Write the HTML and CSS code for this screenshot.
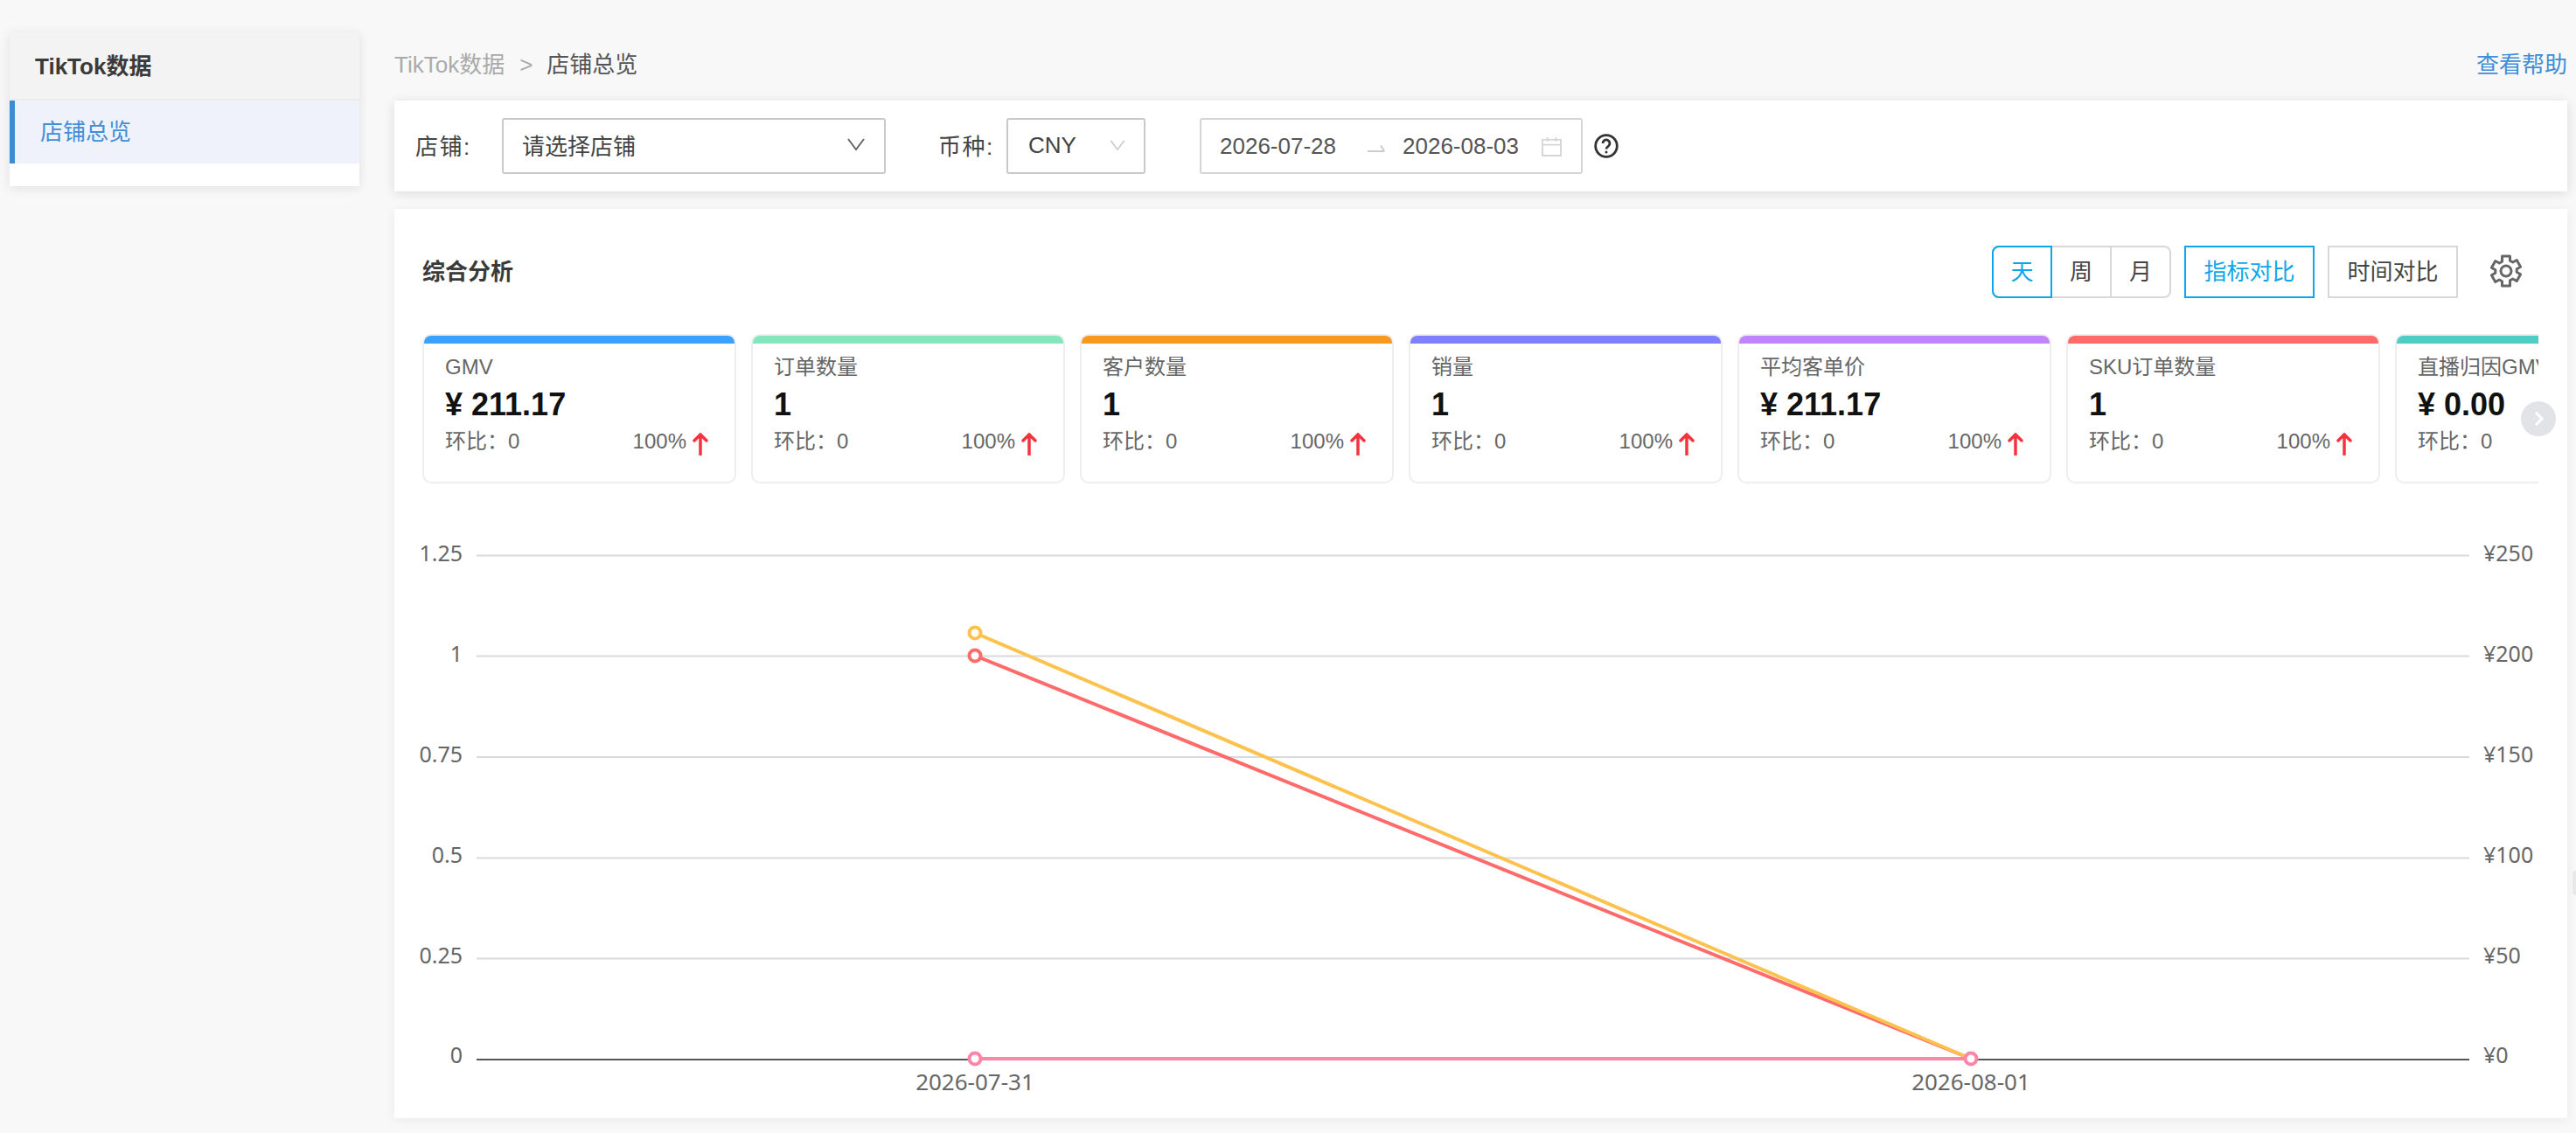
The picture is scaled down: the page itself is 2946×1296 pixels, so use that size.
FILE: index.html
```html
<!DOCTYPE html>
<html lang="zh-CN">
<head>
    <meta charset="UTF-8">
    <title>店铺总览</title>
    <link rel="stylesheet" href="styles.css">
</head>
<body>
    <aside class="sidebar">
        <div class="sidebar-title">TikTok数据</div>
        <div class="sidebar-item">店铺总览</div>
    </aside>

    <main class="main">
        <div class="topbar">
            <div class="crumbs"><span class="crumb-root">TikTok数据</span><span class="crumb-sep">&gt;</span><span>店铺总览</span></div>
            <a class="help-link">查看帮助</a>
        </div>

        <!-- 筛选 -->
        <section class="filter-card">
            <span class="filter-label">店铺:</span>
            <div class="select shop-select">
                <span>请选择店铺</span>
                <svg class="chevron" viewBox="0 0 20 14"><path d="M1 1l9 12 9-12"/></svg>
            </div>
            <span class="filter-label currency-label">币种:</span>
            <div class="select currency-select">
                <span>CNY</span>
                <svg class="chevron chevron-light" viewBox="0 0 20 14"><path d="M1 1l9 12 9-12"/></svg>
            </div>
            <div class="date-range">
                <span>2026-07-28</span>
                <svg class="range-arrow" viewBox="0 0 20 9"><path d="M0 8h19.500M15 1.500l4 6"/></svg>
                <span>2026-08-03</span>
                <svg class="calendar" viewBox="0 0 24 24"><path d="M1 4h22v19H1zM1 10h22M7 1v5M17 1v5"/></svg>
            </div>
            <svg class="help-icon" viewBox="0 0 28 28">
                <circle cx="14" cy="14" r="12.300"/>
                <path d="M10 11a4 4 0 1 1 6.200 3.300c-1.400.9-2.200 1.700-2.200 3.200"/>
                <circle class="help-dot" cx="14" cy="21" r="1.500"/>
            </svg>
        </section>

        <!-- 综合分析 -->
        <section class="analysis-card">
            <div class="analysis-head">
                <h2 class="analysis-title">综合分析</h2>
                <div class="toggle-group">
                    <span class="toggle toggle-on">天</span>
                    <span class="toggle">周</span>
                    <span class="toggle">月</span>
                </div>
                <span class="compare compare-on">指标对比</span>
                <span class="compare">时间对比</span>
                <svg class="gear" viewBox="0 0 38 38">
                    <path d="M14.500 2h9v5.200l3.200 1.800 4.500-2.500 4.400 7.800-4.400 2.500v3.400l4.400 2.500-4.400 7.800-4.500-2.500-3.200 1.800V36h-9v-5.200l-3.200-1.800-4.500 2.500-4.400-7.800 4.400-2.500v-3.400l-4.400-2.500 4.400-7.800 4.500 2.500 3.200-1.800z"/>
                    <circle cx="19" cy="19" r="6"/>
                </svg>
            </div>

            <div class="metrics-wrap">
                <div class="metrics">
                    <div class="metric metric-blue">
                        <div class="metric-name">GMV</div>
                        <div class="metric-value">¥ 211.17</div>
                        <div class="metric-foot"><span>环比&#xFF1A;0</span><span class="metric-rate">100%<svg class="up" viewBox="0 0 18 26"><path d="M9 25V2M2 9l7-7 7 7"/></svg></span></div>
                    </div>
                    <div class="metric metric-green">
                        <div class="metric-name">订单数量</div>
                        <div class="metric-value">1</div>
                        <div class="metric-foot"><span>环比&#xFF1A;0</span><span class="metric-rate">100%<svg class="up" viewBox="0 0 18 26"><path d="M9 25V2M2 9l7-7 7 7"/></svg></span></div>
                    </div>
                    <div class="metric metric-orange">
                        <div class="metric-name">客户数量</div>
                        <div class="metric-value">1</div>
                        <div class="metric-foot"><span>环比&#xFF1A;0</span><span class="metric-rate">100%<svg class="up" viewBox="0 0 18 26"><path d="M9 25V2M2 9l7-7 7 7"/></svg></span></div>
                    </div>
                    <div class="metric metric-indigo">
                        <div class="metric-name">销量</div>
                        <div class="metric-value">1</div>
                        <div class="metric-foot"><span>环比&#xFF1A;0</span><span class="metric-rate">100%<svg class="up" viewBox="0 0 18 26"><path d="M9 25V2M2 9l7-7 7 7"/></svg></span></div>
                    </div>
                    <div class="metric metric-purple">
                        <div class="metric-name">平均客单价</div>
                        <div class="metric-value">¥ 211.17</div>
                        <div class="metric-foot"><span>环比&#xFF1A;0</span><span class="metric-rate">100%<svg class="up" viewBox="0 0 18 26"><path d="M9 25V2M2 9l7-7 7 7"/></svg></span></div>
                    </div>
                    <div class="metric metric-red">
                        <div class="metric-name">SKU订单数量</div>
                        <div class="metric-value">1</div>
                        <div class="metric-foot"><span>环比&#xFF1A;0</span><span class="metric-rate">100%<svg class="up" viewBox="0 0 18 26"><path d="M9 25V2M2 9l7-7 7 7"/></svg></span></div>
                    </div>
                    <div class="metric metric-teal">
                        <div class="metric-name">直播归因GMV</div>
                        <div class="metric-value">¥ 0.00</div>
                        <div class="metric-foot"><span>环比&#xFF1A;0</span><span class="metric-rate">100%<svg class="up" viewBox="0 0 18 26"><path d="M9 25V2M2 9l7-7 7 7"/></svg></span></div>
                    </div>
                </div>
                <span class="metrics-next"><svg viewBox="0 0 12 20"><path d="M2 2l8 8-8 8"/></svg></span>
            </div>

            <!-- 折线图: viewBox 对应页面坐标 -->
            <svg class="chart" viewBox="451 600 2485 679">
                <g class="grid">
                    <path d="M545 635.500H2824M545 750.500H2824M545 866H2824M545 981.500H2824M545 1096.500H2824"/>
                </g>
                <path class="axis" d="M545 1212H2824"/>
                <g class="y-left">
                    <text x="529" y="642">1.25</text>
                    <text x="529" y="757">1</text>
                    <text x="529" y="872">0.75</text>
                    <text x="529" y="987">0.5</text>
                    <text x="529" y="1102">0.25</text>
                    <text x="529" y="1216">0</text>
                </g>
                <g class="y-right">
                    <text x="2840" y="642">¥250</text>
                    <text x="2840" y="757">¥200</text>
                    <text x="2840" y="872">¥150</text>
                    <text x="2840" y="987">¥100</text>
                    <text x="2840" y="1102">¥50</text>
                    <text x="2840" y="1216">¥0</text>
                </g>
                <g class="x-labels">
                    <text x="1115" y="1247">2026-07-31</text>
                    <text x="2254" y="1247">2026-08-01</text>
                </g>
                <path class="line line-red" d="M1115 750L2254 1211"/>
                <path class="line line-yellow" d="M1115 724L2254 1211"/>
                <path class="line line-pink" d="M1115 1211H2254"/>
                <circle class="dot line-red" cx="1115" cy="750" r="6.500"/>
                <circle class="dot line-yellow" cx="1115" cy="724" r="6.500"/>
                <circle class="dot line-pink" cx="1115" cy="1211" r="6.500"/>
                <circle class="dot line-pink" cx="2254" cy="1211" r="6.500"/>
            </svg>
        </section>
    </main>
    <span class="edge-tab"></span>
</body>
</html>
```

FILE: styles.css
```css
* {
    box-sizing: border-box;
}
body {
    margin: 0;
    height: 1296px;
    overflow: hidden;
    display: flex;
    align-items: flex-start;
    padding: 37px 10px 0 11px;
    background-color: #f8f8f8;
    color: #444;
    font-family: "Liberation Sans", "Noto Sans CJK SC", sans-serif;
    font-size: 26px;
}

/* 左侧菜单 */
.sidebar {
    flex: none;
    width: 400px;
    height: 176px;
    background: #fff;
    box-shadow: 0 2px 12px rgba(0, 0, 0, 0.1);
}
.sidebar-title {
    height: 78px;
    padding-left: 29px;
    line-height: 79px;
    font-weight: bold;
    color: #3a3a3a;
    background: #f3f3f3;
    border-bottom: 2px solid #ececec;
}
.sidebar-item {
    height: 72px;
    padding-left: 29px;
    line-height: 73px;
    color: #3f8ed6;
    background: #eff2fb;
    border-left: 6px solid #3d8bd3;
}

/* 右侧内容 */
.main {
    flex: none;
    width: 2485px;
    margin-left: 40px;
    margin-top: -37px;
}
.topbar {
    height: 115px;
    padding-top: 55px;
    display: flex;
    justify-content: space-between;
    line-height: 39px;
}
.crumbs {
    display: flex;
    color: #555;
}
.crumb-root {
    color: #aaa;
}
.crumb-sep {
    margin: 0 16px 0 17px;
    color: #aaa;
}
.help-link {
    color: #3f8ed6;
}

.filter-card {
    height: 104px;
    display: flex;
    align-items: center;
    padding: 0 0 0 24px;
    background: #fff;
    box-shadow: 0 2px 12px rgba(0, 0, 0, 0.12);
}
.filter-label {
    width: 99px;
    flex: none;
    margin-bottom: 3px;
    color: #444;
    letter-spacing: 1.500px;
}
.currency-label {
    width: 78px;
    margin-left: 60px;
}
.select {
    height: 64px;
    padding-bottom: 2px;
    display: flex;
    align-items: center;
    justify-content: space-between;
    border: 2px solid #c9c9c9;
    border-radius: 3px;
    color: #444;
}
.shop-select {
    width: 439px;
    padding-left: 21px;
    padding-right: 22px;
    padding-bottom: 4px;
}
.currency-select {
    width: 159px;
    padding-left: 23px;
    padding-right: 21px;
}
.chevron {
    width: 20px;
    height: 14px;
    fill: none;
    stroke: #666;
    stroke-width: 2;
}
.chevron-light {
    width: 18px;
    height: 12px;
    stroke: #ccc;
}
.date-range {
    flex: none;
    width: 438px;
    height: 64px;
    margin-left: 62px;
    padding: 0 21px;
    display: flex;
    align-items: center;
    white-space: nowrap;
    border: 2px solid #d5d5d5;
    border-radius: 3px;
    color: #555;
}
.range-arrow {
    flex: none;
    width: 20px;
    height: 9px;
    margin: 5px 20px 0 36px;
    fill: none;
    stroke: #ccc;
    stroke-width: 2;
}
.calendar {
    flex: none;
    width: 23px;
    height: 23px;
    margin-left: 26px;
    fill: none;
    stroke: #d6d6d6;
    stroke-width: 2;
}
.help-icon {
    flex: none;
    width: 28px;
    height: 28px;
    margin-left: 13px;
    fill: none;
    stroke: #333;
    stroke-width: 2.8;
}
.help-dot {
    fill: #333;
    stroke: none;
}

.analysis-card {
    height: 1040px;
    margin-top: 20px;
    background: #fff;
    box-shadow: 0 2px 12px rgba(0, 0, 0, 0.06);
}
.analysis-head {
    height: 143px;
    padding: 42px 0 0 32px;
    display: flex;
    align-items: flex-start;
}
.analysis-title {
    margin: 0 auto 0 0;
    font-size: 26px;
    line-height: 60px;
    font-weight: bold;
    color: #3a3a3a;
}
.toggle-group {
    display: flex;
    height: 60px;
    width: 205px;
    border: 2px solid #d8d8d8;
    border-radius: 8px;
}
.toggle {
    flex: 1;
    text-align: center;
    line-height: 56px;
    color: #444;
    border-left: 2px solid #d8d8d8;
}
.toggle-on {
    flex: none;
    width: 69px;
    margin: -2px 0 -2px -2px;
    color: #0ea5e9;
    border: 2px solid #0ea5e9;
    border-radius: 8px 0 0 8px;
}
.toggle-on + .toggle {
    border-left: 0;
}
.compare {
    width: 149px;
    height: 60px;
    margin-left: 15px;
    text-align: center;
    line-height: 56px;
    color: #444;
    border: 2px solid #d8d8d8;
}
.compare-on {
    color: #0ea5e9;
    border-color: #0ea5e9;
}
.gear {
    width: 38px;
    height: 38px;
    margin: 10px 51px 0 36px;
    fill: none;
    stroke: #666;
    stroke-width: 3;
    stroke-linejoin: round;
}

/* 指标卡片 */
.metrics-wrap {
    position: relative;
    width: 2420px;
    height: 171px;
    margin-left: 32px;
}
.metrics {
    display: flex;
    gap: 17px;
    height: 171px;
    overflow: hidden;
}
.metric {
    flex: none;
    width: 359px;
    height: 171px;
    padding: 0 24px;
    border: 2px solid #eeeeee;
    border-radius: 10px;
    background: #fff;
    overflow: hidden;
}
.metric::before {
    content: "";
    display: block;
    height: 9px;
    margin: 0 -24px;
    background: #3ba1ff;
}
.metric-blue::before { background: #3ba1ff; }
.metric-green::before { background: #85e5bd; }
.metric-orange::before { background: #f7981f; }
.metric-indigo::before { background: #8080ff; }
.metric-purple::before { background: #c084fc; }
.metric-red::before { background: #ff6b6b; }
.metric-teal::before { background: #4ecdc4; }
.metric-name {
    margin-top: 7px;
    font-size: 24px;
    line-height: 40px;
    color: #666;
    white-space: nowrap;
}
.metric-value {
    font-size: 36px;
    line-height: 46px;
    font-weight: bold;
    color: #111;
}
.metric-foot {
    display: flex;
    justify-content: space-between;
    font-size: 24px;
    line-height: 38px;
    color: #666;
}
.metric-rate {
    display: flex;
    align-items: center;
    white-space: nowrap;
}
.up {
    width: 18px;
    height: 26px;
    margin: 6px 6px 0 7px;
    fill: none;
    stroke: #f5333f;
    stroke-width: 3.5;
    stroke-linecap: round;
}
.metrics-next {
    position: absolute;
    right: -20px;
    top: 77px;
    width: 40px;
    height: 40px;
    display: flex;
    align-items: center;
    justify-content: center;
    border-radius: 50%;
    background: #e2e3e7;
}
.metrics-next svg {
    width: 11px;
    height: 18px;
    fill: none;
    stroke: #fff;
    stroke-width: 3;
}

/* 折线图 */
.chart {
    display: block;
    width: 2485px;
    height: 679px;
    margin-top: 47px;
}
.grid path {
    stroke: #d9d9de;
    stroke-width: 2;
}
.axis {
    stroke: #55555a;
    stroke-width: 2;
}
.chart text {
    font-family: "Noto Sans", "Liberation Sans", sans-serif;
    font-size: 25px;
    fill: #666;
}
.y-left text {
    text-anchor: end;
}
.chart .x-labels text {
    font-size: 26px;
    text-anchor: middle;
}
.line {
    fill: none;
    stroke-width: 4;
}
.dot {
    fill: #fff;
    stroke-width: 4;
}
.line-red { stroke: #ff6b6b; }
.line-yellow { stroke: #fcc24d; }
.line-pink { stroke: #ff85a7; }

.edge-tab {
    position: absolute;
    right: 0;
    top: 996px;
    width: 4px;
    height: 28px;
    border-radius: 4px 0 0 4px;
    background: #e8e8e8;
}
```
